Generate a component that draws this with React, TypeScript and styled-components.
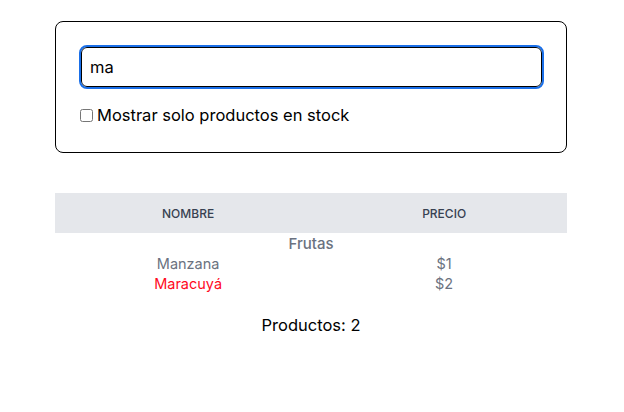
import { useState } from "react";
import styled, { createGlobalStyle } from "styled-components";

const GlobalStyle = createGlobalStyle`
  body {
    margin: 0;
    padding-right: 2px;
    background: #ffffff;
    font-family: "Inter", "Noto Sans", sans-serif;
    color: #000000;
  }
`;

const Page = styled.main`
  width: 512px;
  margin: 0 auto;
  padding-top: 21px;
  display: flex;
  flex-direction: column;
`;

const SearchCard = styled.form`
  border: 1px solid #000000;
  border-radius: 8px;
  padding: 25px 24px 25px 25px;
  display: flex;
  flex-direction: column;
  gap: 16px;
`;

const SearchInput = styled.input`
  box-sizing: border-box;
  width: 100%;
  height: 40px;
  margin: 0;
  padding: 0 8px;
  border: 1px solid #000000;
  border-radius: 6px;
  font-family: inherit;
  font-size: 16.5px;
  color: #000000;
  outline: 2px solid #1a6fe8;
  outline-offset: 0;
`;

const StockLabel = styled.label`
  display: flex;
  align-items: center;
  gap: 4px;
  font-size: 16.5px;
  line-height: 24px;
  color: #000000;

  input {
    width: 13px;
    height: 13px;
    margin: 0 0 0 -1px;
  }
`;

const ProductTable = styled.table`
  margin-top: 40px;
  width: 100%;
  border-collapse: collapse;
`;

const HeadCell = styled.th<{ $width?: string }>`
  height: 40px;
  padding: 0;
  width: ${({ $width }) => $width || "auto"};
  background: #e5e7eb;
  color: #374151;
  font-size: 12px;
  font-weight: 500;
  text-transform: uppercase;
  text-align: center;
`;

const CategoryCell = styled.td`
  height: 20px;
  padding: 0;
  text-align: center;
  color: #6b7280;
  font-size: 15px;
  font-weight: 500;
`;

const Cell = styled.td<{ $stocked?: boolean }>`
  height: 20px;
  padding: 0;
  text-align: center;
  font-size: 14.5px;
  color: ${({ $stocked }) => ($stocked ? "#6b7280" : "#ff0a1e")};
`;

const Total = styled.p`
  margin: 20px 0 0;
  text-align: center;
  font-size: 16.5px;
  line-height: 24px;
`;

const products = [
  { category: "Frutas", name: "Manzana", price: "$1", stocked: true },
  { category: "Frutas", name: "Maracuyá", price: "$2", stocked: false },
];

export default function App() {
  const [query, setQuery] = useState("ma");
  const [onlyStock, setOnlyStock] = useState(false);

  return (
    <>
      <GlobalStyle />
      <Page>
        <SearchCard onSubmit={(e) => e.preventDefault()}>
          <SearchInput value={query} onChange={(e) => setQuery(e.target.value)} />
          <StockLabel>
            <input
              type="checkbox"
              checked={onlyStock}
              onChange={(e) => setOnlyStock(e.target.checked)}
            />
            Mostrar solo productos en stock
          </StockLabel>
        </SearchCard>
        <ProductTable>
          <thead>
            <tr>
              <HeadCell $width="52%">Nombre</HeadCell>
              <HeadCell>Precio</HeadCell>
            </tr>
          </thead>
          <tbody>
            <tr>
              <CategoryCell colSpan={2}>Frutas</CategoryCell>
            </tr>
            {products.map((p) => (
              <tr key={p.name}>
                <Cell $stocked={p.stocked}>{p.name}</Cell>
                <Cell $stocked>{p.price}</Cell>
              </tr>
            ))}
          </tbody>
        </ProductTable>
        <Total>Productos: {products.length}</Total>
      </Page>
    </>
  );
}
